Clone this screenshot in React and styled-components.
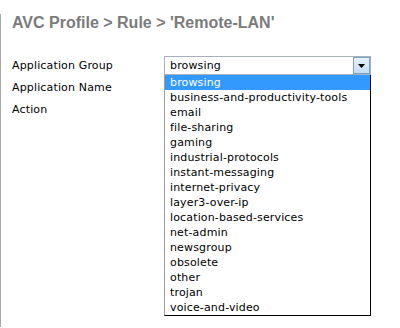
import styled, { createGlobalStyle } from "styled-components";

const GlobalStyle = createGlobalStyle`
  html, body {
    margin: 0;
    padding: 0;
    background: #ffffff;
  }
`;

const groups = [
  "browsing",
  "business-and-productivity-tools",
  "email",
  "file-sharing",
  "gaming",
  "industrial-protocols",
  "instant-messaging",
  "internet-privacy",
  "layer3-over-ip",
  "location-based-services",
  "net-admin",
  "newsgroup",
  "obsolete",
  "other",
  "trojan",
  "voice-and-video",
];

const Frame = styled.div`
  margin-top: 15px;
  height: 313px;
  border-left: 1px solid #a9a9a9;
  box-sizing: border-box;
  padding-left: 11px;
`;

const Title = styled.h1`
  margin: -1px 0 0 0;
  font-family: "Liberation Sans", Arial, sans-serif;
  font-size: 16px;
  line-height: 18px;
  font-weight: bold;
  color: #7b7b7b;
`;

const Form = styled.div`
  margin-top: 24px;
  display: grid;
  grid-template-columns: 152px 207px;
  grid-auto-rows: 22px;
  font-family: "DejaVu Sans", Verdana, sans-serif;
  font-size: 11px;
  letter-spacing: 0.15px;
  color: #000;
`;

const Label = styled.div`
  line-height: 19px;
`;

const Cell = styled.div`
  position: relative;
`;

const Select = styled.div`
  height: 19px;
  box-sizing: border-box;
  border: 1px solid #a7b0bb;
  background: #fff;
  display: flex;
  align-items: center;
  justify-content: space-between;
  padding-left: 5px;
`;

const Arrow = styled.div`
  width: 17px;
  height: 17px;
  box-sizing: border-box;
  border: 1px solid #7aa0c4;
  background: linear-gradient(#e6f1fb, #c4def5);
  display: flex;
  align-items: center;
  justify-content: center;
`;

const List = styled.ul`
  position: absolute;
  top: 19px;
  left: 0;
  width: 207px;
  margin: 0;
  padding: 0;
  list-style: none;
  box-sizing: border-box;
  background: #fff;
  border-left: 1px solid #a0a0a0;
  border-right: 1px solid #000;
  border-bottom: 1px solid #000;
  z-index: 2;
`;

const Option = styled.li`
  height: 15px;
  line-height: 15px;
  padding-left: 5px;
  white-space: nowrap;
  background: ${(p) => (p.$active ? "#3399ff" : "transparent")};
  color: ${(p) => (p.$active ? "#fff" : "#000")};
`;

export default function App() {
  return (
    <>
      <GlobalStyle />
      <Frame>
        <Title>AVC Profile &gt; Rule &gt; 'Remote-LAN'</Title>
        <Form>
          <Label>Application Group</Label>
          <Cell>
            <Select>
              <span>browsing</span>
              <Arrow>
                <svg width="7" height="4" viewBox="0 0 7 4">
                  <path d="M0 0h7L3.5 4z" fill="#000" />
                </svg>
              </Arrow>
            </Select>
            <List>
              {groups.map((g, i) => (
                <Option key={g} $active={i === 0}>
                  {g}
                </Option>
              ))}
            </List>
          </Cell>
          <Label>Application Name</Label>
          <Cell />
          <Label>Action</Label>
          <Cell />
        </Form>
      </Frame>
    </>
  );
}
